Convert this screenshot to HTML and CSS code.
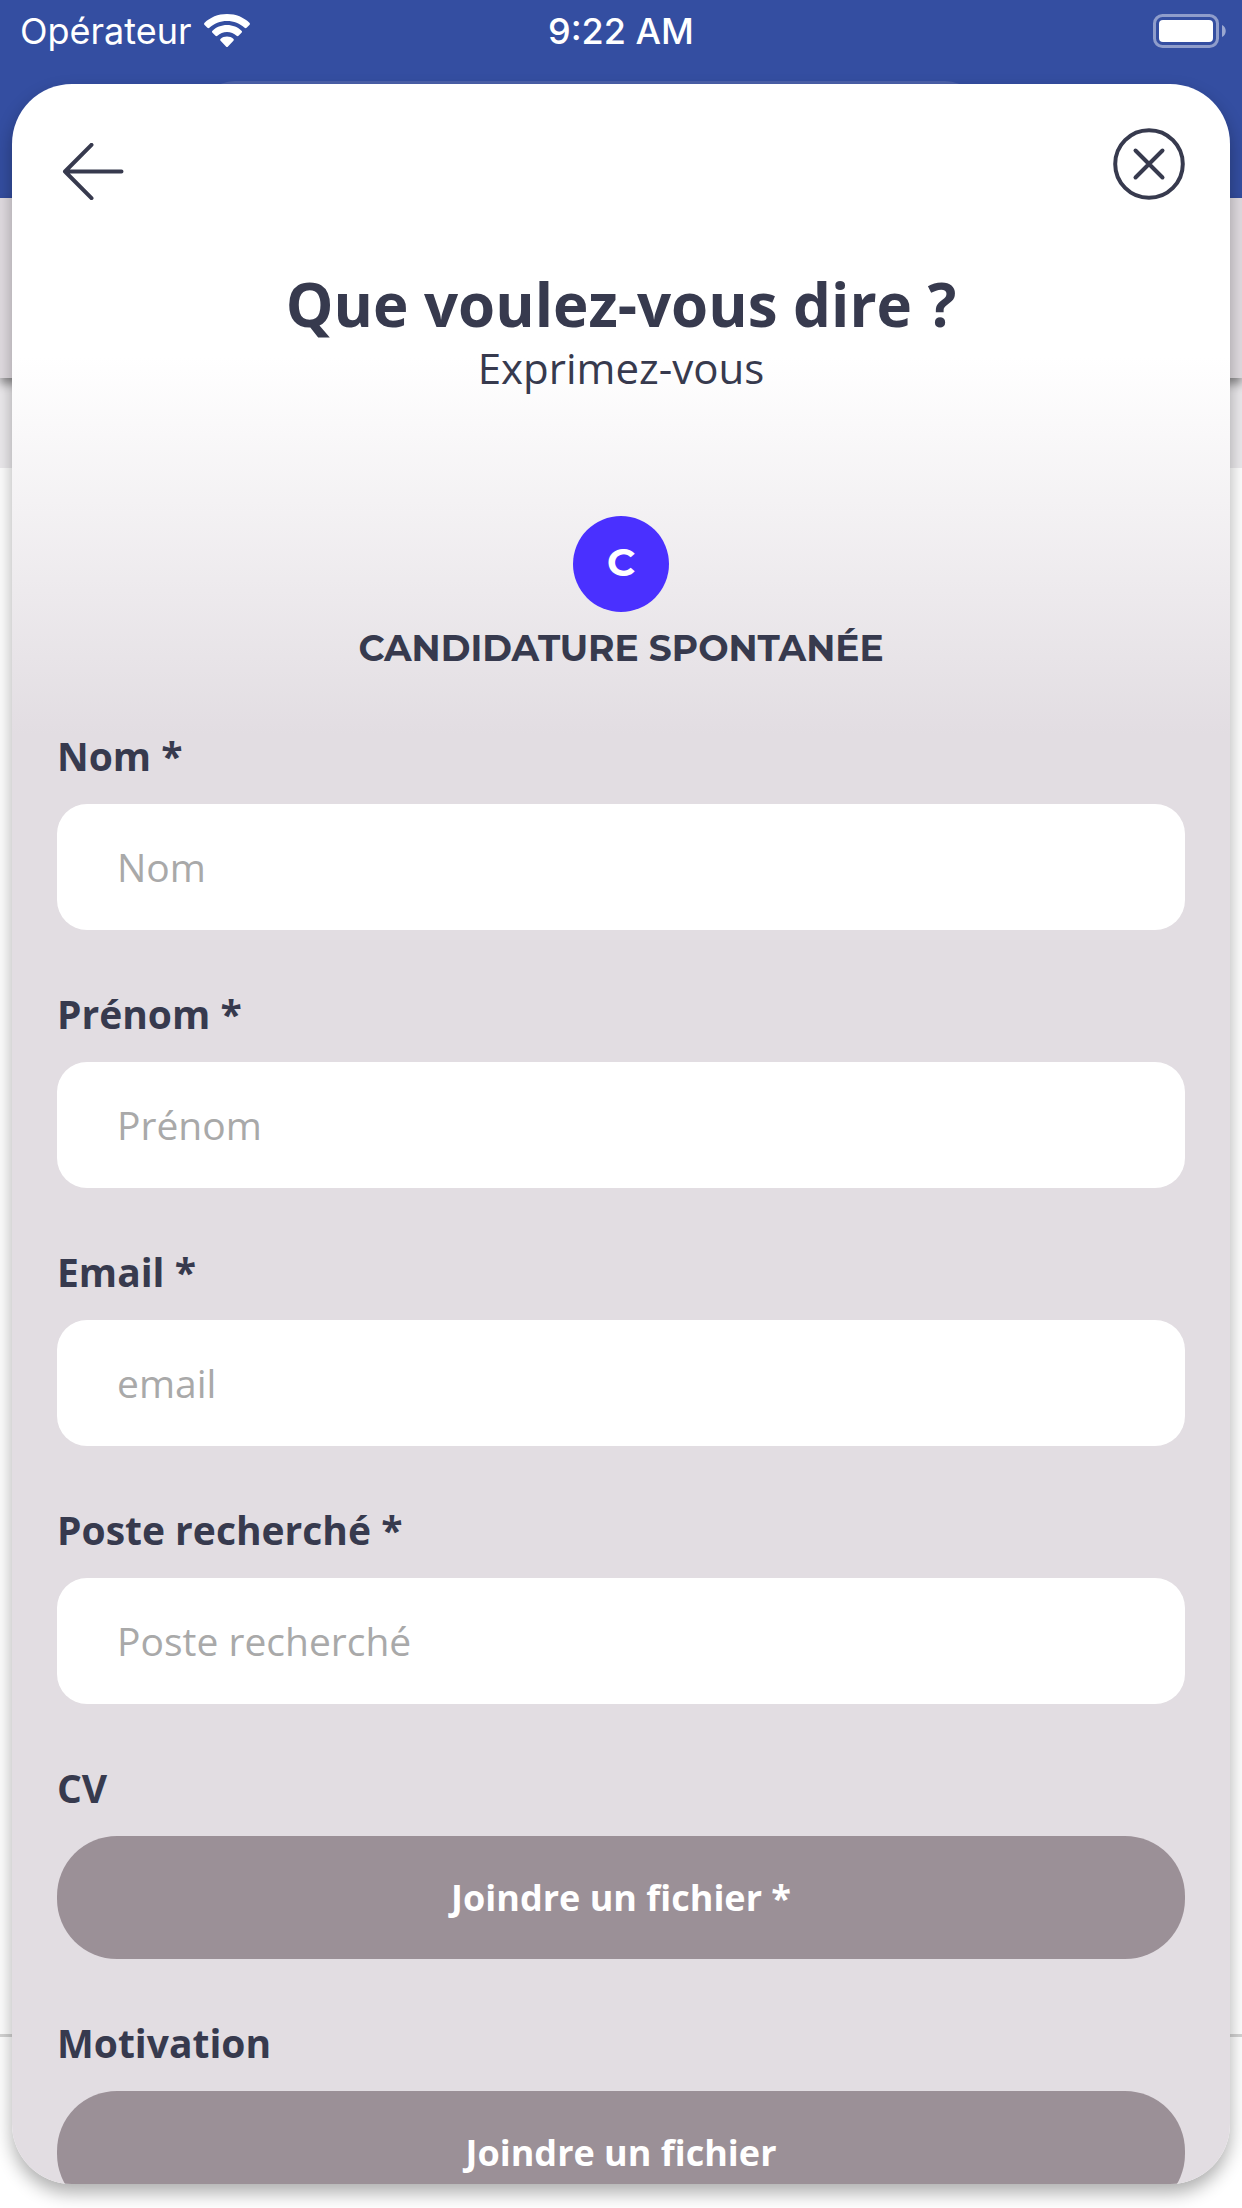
FILE: index.html
```
<!DOCTYPE html>
<html lang="fr">
<head>
    <meta charset="UTF-8">
    <meta name="viewport" content="width=device-width, initial-scale=1.0">
    <title>Candidature spontanée</title>
    <link rel="stylesheet" href="styles.css">
</head>
<body>
    <!-- page behind the modal -->
    <div class="backdrop" aria-hidden="true">
        <div class="navbar">
            <div class="search"></div>
        </div>
        <div class="banner"></div>
        <div class="subbanner"></div>
        <div class="page"></div>
        <div class="tabbar"></div>
    </div>

    <div class="screen">
        <div class="status">
            <div class="carrier">
                <span>Opérateur</span>
                <svg class="wifi" viewBox="0 0 46 34" fill="#fff">
                    <path d="M23 0C14 0 6 3.4 0.6 8.8c-.7.7-.7 1.5 0 2.2l2.8 2.8c.6.6 1.4.6 2 0C10 9.500 16.200 7 23 7s13 2.500 17.600 6.800c.6.6 1.400.6 2 0l2.800-2.800c.7-.7.7-1.500 0-2.200C40 3.400 32 0 23 0z"/>
                    <path d="M23 11c-5.700 0-10.900 2.200-14.500 5.700-.7.7-.7 1.400 0 2.100l3 3c.6.6 1.300.6 1.900 0 2.500-2.300 5.900-3.800 9.600-3.800s7.100 1.500 9.600 3.800c.6.6 1.300.6 1.900 0l3-3c.7-.7.7-1.400 0-2.100C33.900 13.200 28.700 11 23 11z"/>
                    <path d="M23 22.500c-2.500 0-4.700.9-6.300 2.300-.7.6-.7 1.300-.1 1.900l5.400 5.700c.6.7 1.400.7 2 0l5.400-5.700c.6-.6.6-1.300-.1-1.900-1.600-1.400-3.800-2.300-6.300-2.300z"/>
                </svg>
            </div>
            <span class="time">9:22 AM</span>
            <svg class="battery" viewBox="0 0 74 34">
                <rect x="1.500" y="1.500" width="63" height="31" rx="8" fill="none" stroke="#fff" stroke-opacity=".45" stroke-width="3"/>
                <rect x="6" y="6" width="54" height="22" rx="4" fill="#fff"/>
                <path d="M69 11c5 2 5 10 0 12z" fill="#fff" fill-opacity=".5"/>
            </svg>
        </div>

        <main class="modal">
            <header class="top">
                <button class="icon-btn" type="button" aria-label="Retour">
                    <svg class="arrow" viewBox="0 0 72 57">
                        <path d="M34.500 1.800L8 28.500l26.500 26.700M8 28.500h56.500"/>
                    </svg>
                </button>
                <button class="icon-btn" type="button" aria-label="Fermer">
                    <svg class="close" viewBox="0 0 72 72">
                        <circle cx="36" cy="36" r="33.800"/>
                        <path d="M22.500 22.500l27 27M49.500 22.500l-27 27"/>
                    </svg>
                </button>
            </header>

            <h1>Que voulez-vous dire ?</h1>
            <p class="subtitle">Exprimez-vous</p>

            <div class="category">
                <span class="badge">C</span>
                <h2>CANDIDATURE SPONTANÉE</h2>
            </div>

            <form>
                <div class="field">
                    <label for="nom">Nom *</label>
                    <input id="nom" type="text" placeholder="Nom">
                </div>
                <div class="field">
                    <label for="prenom">Prénom *</label>
                    <input id="prenom" type="text" placeholder="Prénom">
                </div>
                <div class="field">
                    <label for="email">Email *</label>
                    <input id="email" type="email" placeholder="email">
                </div>
                <div class="field">
                    <label for="poste">Poste recherché *</label>
                    <input id="poste" type="text" placeholder="Poste recherché">
                </div>
                <div class="field">
                    <label for="cv">CV</label>
                    <button id="cv" class="file" type="button">Joindre un fichier *</button>
                </div>
                <div class="field">
                    <label for="motivation">Motivation</label>
                    <button id="motivation" class="file" type="button">Joindre un fichier</button>
                </div>
            </form>
        </main>
    </div>
</body>
</html>
```
FILE: styles.css
```
*{
    margin: 0;
    padding: 0;
    box-sizing: border-box;
}

body{
    position: relative;
    height: 100vh;
    overflow: hidden;
    background: #fff;
    color: #373a4e;
    font-family: "Open Sans", "Noto Sans", sans-serif;
}

/* page behind */
.backdrop{
    position: absolute;
    inset: 0;
    display: flex;
    flex-direction: column;
}

.navbar{
    height: 198px;
    padding: 81px 21% 0 16%;
    background: #344ea1;
}

.search{
    height: 90px;
    border-radius: 36px;
    background: #4b61ab;
}

.banner{
    position: relative;
    height: 180px;
    background: #e2dde2;
    box-shadow: 0 6px 9px rgba(0, 0, 0, 0.4);
}

.subbanner{
    height: 90px;
    background: #edebee;
}

.page{
    flex: 1;
}

.tabbar{
    height: 174px;
    border-top: 3px solid #d4d4d4;
}

/* front */
.screen{
    position: relative;
    height: 100vh;
    display: flex;
    flex-direction: column;
}

.status{
    display: grid;
    grid-template-columns: 1fr auto 1fr;
    align-items: center;
    height: 62px;
    margin-bottom: 22px;
    padding: 0 15px;
    color: #fff;
    font-family: Inter, sans-serif;
    font-size: 36px;
}

.carrier{
    display: flex;
    align-items: center;
    gap: 12px;
    padding-left: 5px;
}

.wifi{
    width: 46px;
    height: 34px;
}

.time{
    font-weight: 500;
}

.battery{
    width: 74px;
    height: 34px;
    justify-self: end;
}

.modal{
    flex: 1;
    min-height: 0;
    margin: 0 12px 24px;
    padding: 44px 45px 0;
    overflow: hidden;
    border-radius: 60px;
    background: linear-gradient(#fff 13%, #e2dde2 31%);
    box-shadow: 0 9px 18px rgba(0, 0, 0, 0.32);
}

.top{
    display: flex;
    justify-content: space-between;
    align-items: flex-end;
}

.icon-btn{
    border: none;
    background: none;
    cursor: pointer;
}

.icon-btn svg{
    display: block;
    fill: none;
    stroke: #373a4e;
    stroke-width: 4;
    stroke-linecap: round;
    stroke-linejoin: round;
}

.arrow{
    width: 72px;
    height: 57px;
}

.close{
    width: 72px;
    height: 72px;
}

h1{
    margin-top: 68px;
    font-size: 60px;
    line-height: 72px;
    text-align: center;
}

.subtitle{
    font-size: 42px;
    line-height: 56px;
    text-align: center;
}

.category{
    display: flex;
    flex-direction: column;
    align-items: center;
    gap: 12px;
    margin-top: 120px;
    font-family: Montserrat, Inter, sans-serif;
}

.badge{
    width: 96px;
    height: 96px;
    border-radius: 50%;
    background: #4a30ff;
    color: #fff;
    font-size: 39px;
    font-weight: bold;
    line-height: 93px;
    text-align: center;
}

h2{
    font-size: 36px;
    line-height: 48px;
}

form{
    display: flex;
    flex-direction: column;
    gap: 57px;
    margin-top: 57px;
}

.field{
    display: flex;
    flex-direction: column;
    gap: 21px;
}

label{
    font-size: 39px;
    font-weight: bold;
    line-height: 54px;
}

input{
    width: 100%;
    height: 126px;
    padding: 0 60px 2px;
    border: none;
    border-radius: 30px;
    outline: none;
    background: #fff;
    color: #373a4e;
    font-family: inherit;
    font-size: 39px;
}

input::placeholder{
    color: #a9a9a9;
}

.file{
    height: 123px;
    border: none;
    border-radius: 60px;
    background: #9b9097;
    color: #fff;
    font-family: inherit;
    font-size: 36px;
    font-weight: bold;
    cursor: pointer;
}
```
